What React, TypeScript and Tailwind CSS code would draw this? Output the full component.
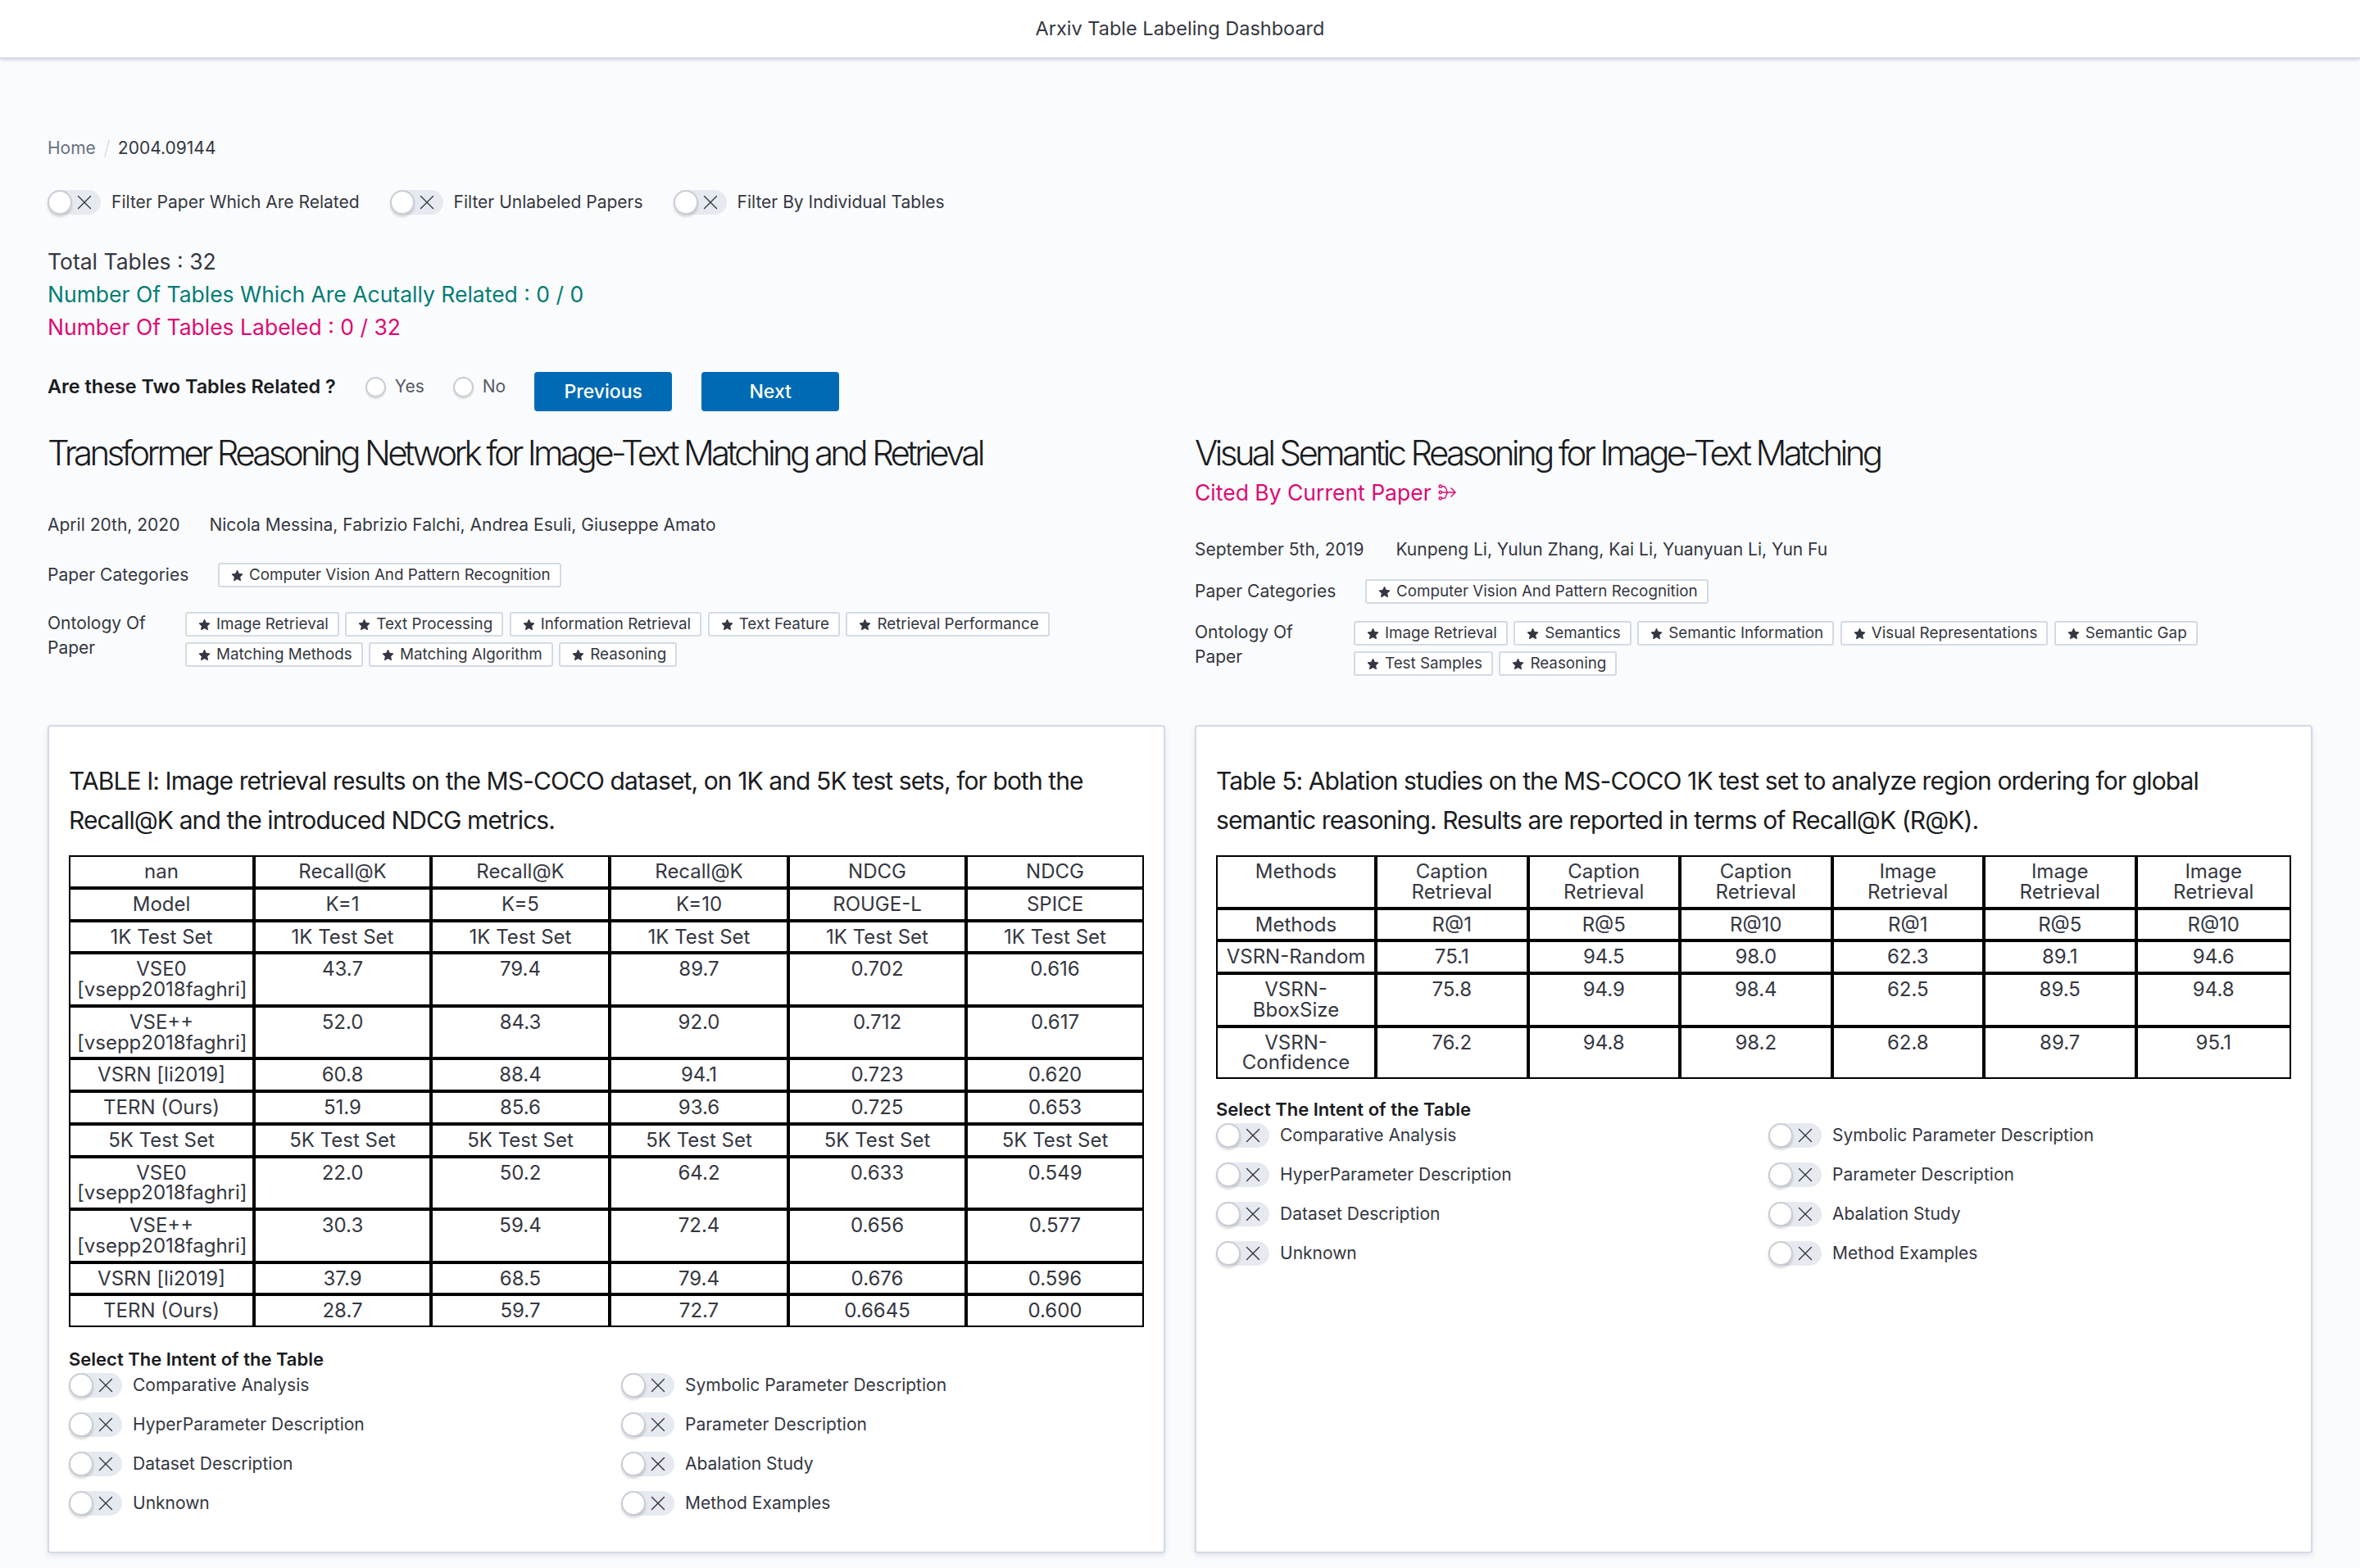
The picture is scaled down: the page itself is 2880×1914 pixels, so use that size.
import { X } from 'lucide-react';

const INTENTS = [
  ['Comparative Analysis', 'Symbolic Parameter Description'],
  ['HyperParameter Description', 'Parameter Description'],
  ['Dataset Description', 'Abalation Study'],
  ['Unknown', 'Method Examples'],
];

const TABLE_ONE = [
  ['nan', 'Recall@K', 'Recall@K', 'Recall@K', 'NDCG', 'NDCG'],
  ['Model', 'K=1', 'K=5', 'K=10', 'ROUGE-L', 'SPICE'],
  ['1K Test Set', '1K Test Set', '1K Test Set', '1K Test Set', '1K Test Set', '1K Test Set'],
  ['VSE0 [vsepp2018faghri]', '43.7', '79.4', '89.7', '0.702', '0.616'],
  ['VSE++ [vsepp2018faghri]', '52.0', '84.3', '92.0', '0.712', '0.617'],
  ['VSRN [li2019]', '60.8', '88.4', '94.1', '0.723', '0.620'],
  ['TERN (Ours)', '51.9', '85.6', '93.6', '0.725', '0.653'],
  ['5K Test Set', '5K Test Set', '5K Test Set', '5K Test Set', '5K Test Set', '5K Test Set'],
  ['VSE0 [vsepp2018faghri]', '22.0', '50.2', '64.2', '0.633', '0.549'],
  ['VSE++ [vsepp2018faghri]', '30.3', '59.4', '72.4', '0.656', '0.577'],
  ['VSRN [li2019]', '37.9', '68.5', '79.4', '0.676', '0.596'],
  ['TERN (Ours)', '28.7', '59.7', '72.7', '0.6645', '0.600'],
];

const TABLE_TWO = [
  ['Methods', 'Caption Retrieval', 'Caption Retrieval', 'Caption Retrieval', 'Image Retrieval', 'Image Retrieval', 'Image Retrieval'],
  ['Methods', 'R@1', 'R@5', 'R@10', 'R@1', 'R@5', 'R@10'],
  ['VSRN-Random', '75.1', '94.5', '98.0', '62.3', '89.1', '94.6'],
  ['VSRN-BboxSize', '75.8', '94.9', '98.4', '62.5', '89.5', '94.8'],
  ['VSRN-Confidence', '76.2', '94.8', '98.2', '62.8', '89.7', '95.1'],
];

// column widths read off the reference, the last column takes what is left
const COLS_ONE = ['w-[226px]', 'w-[216px]', 'w-[218px]', 'w-[218px]', 'w-[217px]', ''];
const COLS_TWO = ['w-[195px]', '', '', '', '', '', ''];

function Toggle({ label }: { label: string }) {
  return (
    <div className="flex items-center gap-[13px]">
      <div className="relative h-[30px] w-[65px] rounded-full bg-[#e6e9f0]">
        <div className="absolute left-0 top-0 h-[30px] w-[30px] rounded-full border-2 border-[#c9cdd6] bg-white shadow-[0_3px_3px_rgba(0,0,0,0.15)]" />
        <X className="absolute left-[30px] top-0 h-[30px] w-[30px] text-[#343741]" strokeWidth={1.1} />
      </div>
      <span className="text-[21px] leading-[30px] text-[#343741]">{label}</span>
    </div>
  );
}

function Radio({ label }: { label: string }) {
  return (
    <div className="flex items-center gap-[11px]">
      <div className="h-[25px] w-[25px] rounded-full border-2 border-[#c9cdd6] bg-white shadow-[0_2px_2px_rgba(0,0,0,0.12)]" />
      <span className="text-[21px] leading-[30px] text-[#535966]">{label}</span>
    </div>
  );
}

function Tag({ label }: { label: string }) {
  return (
    <span className="inline-flex h-[30px] items-center gap-[7px] rounded-[3px] border-2 border-[#d3dae6] bg-white pl-[14px] pr-[11px] text-[18.8px] text-[#343741]">
      <svg viewBox="0 0 16 16" className="h-[15px] w-[15px] fill-[#343741] stroke-[#343741]" strokeWidth="1" strokeLinejoin="round">
        <path d="M8 1.2l2.1 4.5 4.9.7-3.6 3.4.9 4.9L8 12.4l-4.3 2.3.9-4.9L1 6.4l4.9-.7z" />
      </svg>
      {label}
    </span>
  );
}

function Meta({ date, authors, className }: { date: string; authors: string; className: string }) {
  return (
    <div className={`flex text-[21px] leading-[30px] text-[#343741] ${className}`}>
      <span>{date}</span>
      <span>{authors}</span>
    </div>
  );
}

function PaperHead({ categoryTop, ontologyTop, labelWidth, tags }: { categoryTop: string; ontologyTop: string; labelWidth: string; tags: string[] }) {
  return (
    <>
      <div className={`flex items-center ${categoryTop}`}>
        <span className="w-[208px] text-[21px] leading-[30px] text-[#343741]">Paper Categories</span>
        <Tag label="Computer Vision And Pattern Recognition" />
      </div>
      <div className={`flex ${ontologyTop}`}>
        <span className={`${labelWidth} -mt-[1px] shrink-0 pr-[40px] text-[21px] leading-[30px] text-[#343741]`}>Ontology Of Paper</span>
        <div className="flex flex-wrap gap-x-[7.5px] gap-y-[7px]">
          {tags.map((t) => (
            <Tag key={t} label={t} />
          ))}
        </div>
      </div>
    </>
  );
}

function DataTable({ rows, cols }: { rows: string[][]; cols: string[] }) {
  return (
    <table className="w-[1312px] table-fixed border-separate border-spacing-0 border-2 border-black text-[24px] leading-[24.75px] text-[#343741]">
      <colgroup>
        {cols.map((c, i) => (
          <col key={i} className={c} />
        ))}
      </colgroup>
      <tbody>
        {rows.map((row, i) => (
          <tr key={i}>
            {row.map((cell, j) => (
              <td
                key={j}
                className={`border-black px-[8px] pb-[5px] pt-[6px] text-center align-top ${j < row.length - 1 ? 'border-r-4' : ''} ${i < rows.length - 1 ? 'border-b-4' : ''}`}
              >
                {cell}
              </td>
            ))}
          </tr>
        ))}
      </tbody>
    </table>
  );
}

function TableCard({ title, selectTop, children }: { title: string; selectTop: string; children: React.ReactNode }) {
  return (
    <div className="h-[1011px] rounded-[4px] border-2 border-[#d3dae6] bg-white pl-[24px] pr-[24px] pt-[42px] shadow-[0_3px_6px_rgba(152,162,179,0.25)]">
      <h3 className="text-[30px] font-normal leading-[48px] tracking-[-0.03em] text-[#1a1c21]">{title}</h3>
      <div className="mt-[19px]">{children}</div>
      <div className={`${selectTop} text-[22px] font-semibold leading-[30px] text-[#1a1c21]`}>Select The Intent of the Table</div>
      <div className="mt-[2px] grid grid-cols-[674px_1fr] gap-y-[18px]">
        {INTENTS.flat().map((label) => (
          <Toggle key={label} label={label} />
        ))}
      </div>
    </div>
  );
}

export default function App() {
  return (
    <div className="min-h-[1914px] bg-[#fafbfd] font-['Inter',sans-serif]">
      <header className="flex h-[72px] items-center justify-center border-b-2 border-[#d3dae6] bg-white shadow-[0_2px_3px_rgba(152,162,179,0.3)]">
        <span className="text-[23.5px] text-[#343741]">Arxiv Table Labeling Dashboard</span>
      </header>

      <main className="px-[58px]">
        <div className="mt-[94px] flex items-center gap-[13px] text-[21px] leading-[30px]">
          <span className="text-[#69707d]">Home</span>
          <span className="h-[22px] w-[1px] rotate-[15deg] bg-[#c9cdd6]" />
          <span className="text-[#343741]">2004.09144</span>
        </div>

        <div className="mt-[36px] flex gap-[37px]">
          <Toggle label="Filter Paper Which Are Related" />
          <Toggle label="Filter Unlabeled Papers" />
          <Toggle label="Filter By Individual Tables" />
        </div>

        <div className="mt-[37px] text-[26.5px] leading-[40px]">
          <div className="text-[#343741]">Total Tables : 32</div>
          <div className="text-[#017d73]">Number Of Tables Which Are Acutally Related : 0 / 0</div>
          <div className="text-[#dd0a73]">Number Of Tables Labeled : 0 / 32</div>
        </div>

        <div className="mt-[35px] flex h-[48px]">
          <div className="mt-[3px] flex h-[30px] items-center gap-[35px]">
            <span className="mr-[1px] text-[23.4px] font-semibold text-[#1a1c21]">Are these Two Tables Related ?</span>
            <Radio label="Yes" />
            <Radio label="No" />
          </div>
          <button className="ml-[35px] h-[48px] w-[168px] rounded-[4px] bg-[#006bb4] text-[23px] font-medium text-white">Previous</button>
          <button className="ml-[36px] h-[48px] w-[168px] rounded-[4px] bg-[#006bb4] text-[23px] font-medium text-white">Next</button>
        </div>

        <div className="mt-[26px] grid grid-cols-2 gap-x-[36px]">
          <div>
            <div className="h-[357px]">
              <h2 className="text-[42px] font-light leading-[50px] tracking-[-3.66px] text-[#1a1c21]">
                Transformer Reasoning Network for Image-Text Matching and Retrieval
              </h2>
              <Meta className="mt-[48px] gap-[36px]" date="April 20th, 2020" authors="Nicola Messina, Fabrizio Falchi, Andrea Esuli, Giuseppe Amato" />
              <PaperHead
                categoryTop="mt-[31px]"
                ontologyTop="mt-[30px]"
                labelWidth="w-[168px]"
                tags={['Image Retrieval', 'Text Processing', 'Information Retrieval', 'Text Feature', 'Retrieval Performance', 'Matching Methods', 'Matching Algorithm', 'Reasoning']}
              />
            </div>
            <TableCard selectTop="mt-[24px]" title="TABLE I: Image retrieval results on the MS-COCO dataset, on 1K and 5K test sets, for both the Recall@K and the introduced NDCG metrics.">
              <DataTable rows={TABLE_ONE} cols={COLS_ONE} />
            </TableCard>
          </div>

          <div>
            <div className="h-[357px]">
              <h2 className="text-[42px] font-light leading-[50px] tracking-[-3.66px] text-[#1a1c21]">
                Visual Semantic Reasoning for Image-Text Matching
              </h2>
              <div className="mt-[3px] flex items-center gap-[8px] text-[26.5px] leading-[40px] text-[#dd0a73]">
                Cited By Current Paper
                <svg viewBox="0 0 24 24" className="h-[22px] w-[22px]" fill="none" stroke="#dd0a73" strokeWidth="1.6">
                  <circle cx="3" cy="4" r="1.8" />
                  <circle cx="3" cy="12" r="1.8" />
                  <circle cx="3" cy="20" r="1.8" />
                  <path d="M5 4h3c3 0 3 8 5 8M5 20h3c3 0 3-8 5-8M5 12h17M17 6l6 6-6 6" />
                </svg>
              </div>
              <Meta className="mt-[35px] gap-[39px]" date="September 5th, 2019" authors="Kunpeng Li, Yulun Zhang, Kai Li, Yuanyuan Li, Yun Fu" />
              <PaperHead
                categoryTop="mt-[21px]"
                ontologyTop="mt-[21px]"
                labelWidth="w-[194px]"
                tags={['Image Retrieval', 'Semantics', 'Semantic Information', 'Visual Representations', 'Semantic Gap', 'Test Samples', 'Reasoning']}
              />
            </div>
            <TableCard selectTop="mt-[22px]" title="Table 5: Ablation studies on the MS-COCO 1K test set to analyze region ordering for global semantic reasoning. Results are reported in terms of Recall@K (R@K).">
              <DataTable rows={TABLE_TWO} cols={COLS_TWO} />
            </TableCard>
          </div>
        </div>
      </main>
    </div>
  );
}
